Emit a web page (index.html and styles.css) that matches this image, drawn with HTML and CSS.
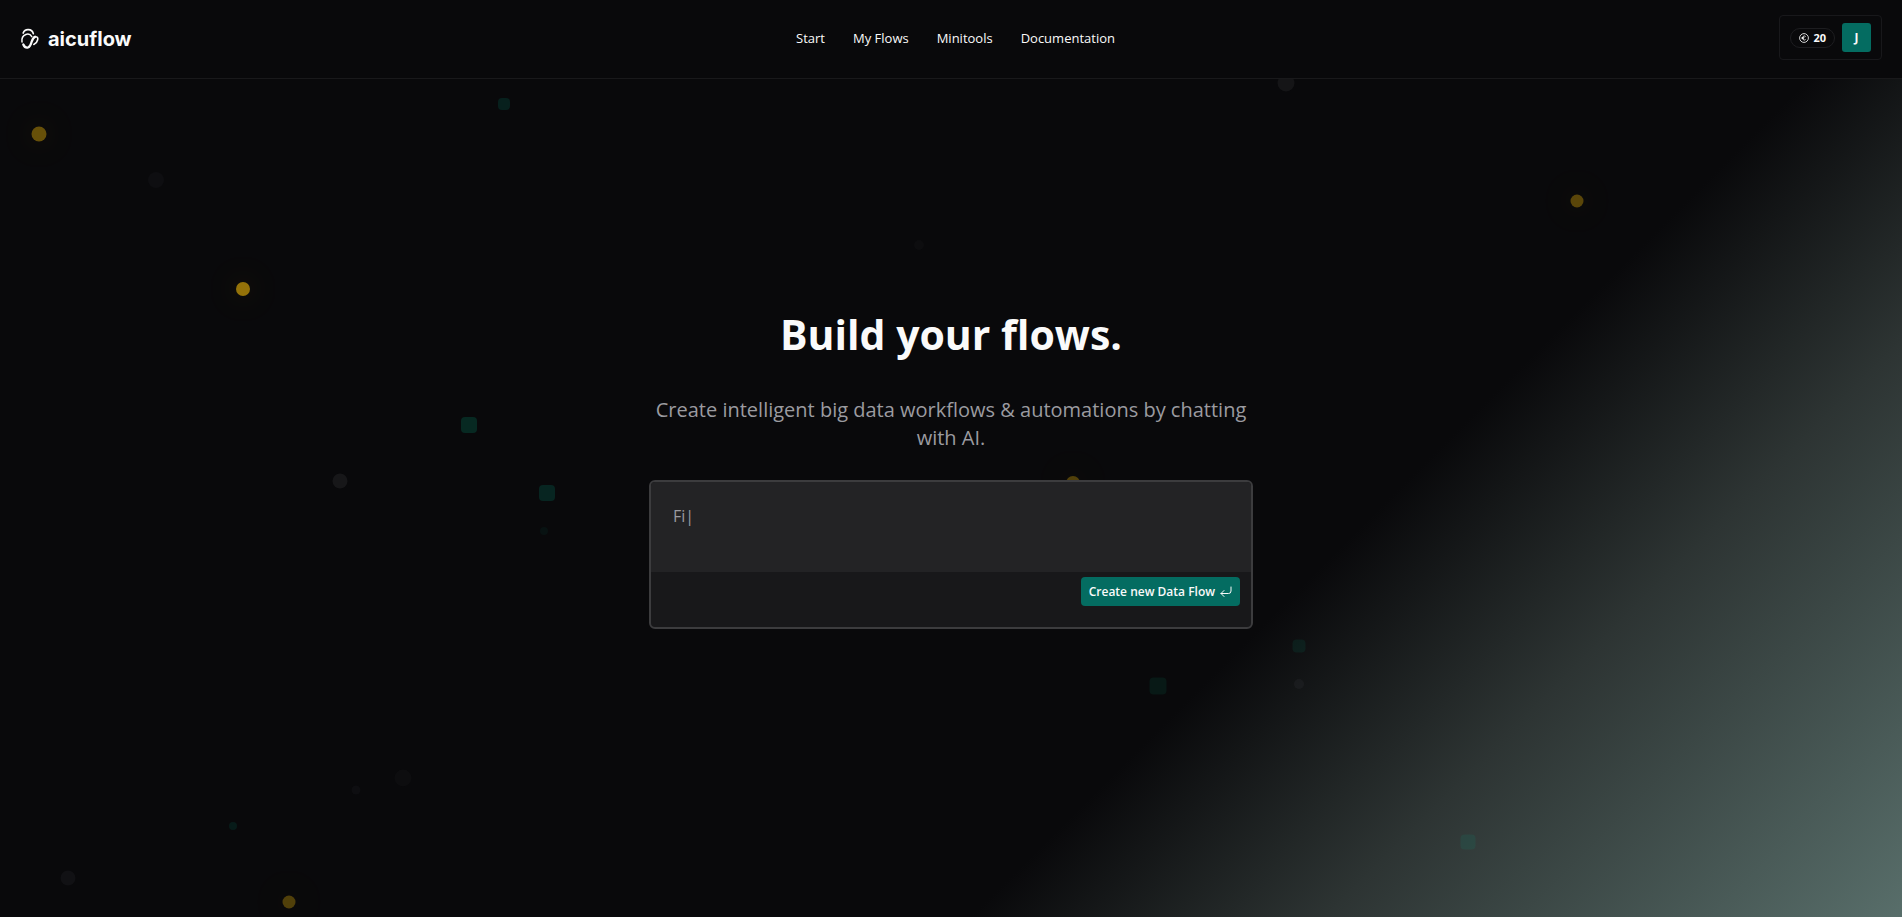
FILE: index.html
```html
<!DOCTYPE html>
<html lang="en">
<head>
<meta charset="utf-8">
<meta name="viewport" content="width=device-width, initial-scale=1">
<title>aicuflow</title>
<link rel="stylesheet" href="styles.css">
</head>
<body>

<!-- Header -->
<header class="header">
<a href="#" class="brand">
<svg class="brand-icon" viewBox="0 0 20 22" fill="none" stroke="currentColor" stroke-linecap="round">
<path d="M3.200 5C4 2.800 6 1.500 8.300 1.600c2.600.1 4.500 1.700 5 4" stroke-width="1.700"/>
<path d="M11.800 8.700C10.500 6.500 8 5.700 5.800 6.500 3 7.600 1.500 10.500 2 14" stroke-width="1.500"/>
<path d="M3.300 16.500c1 2.300 2.900 3.500 4.700 3 2.500-.7 2.900-3.700 3.800-6.200.8-2.300 1.600-4 3.200-4.500" stroke-width="2.300"/>
<path d="M15 8.800c2-.5 3.200.8 2.700 2.900-.5 2.200-2 3.900-3.900 4.800" stroke-width="1.600"/>
</svg>
<span>aicuflow</span>
</a>

<nav class="nav">
<a href="#">Start</a>
<a href="#">My Flows</a>
<a href="#">Minitools</a>
<a href="#">Documentation</a>
</nav>

<div class="account">
<button class="credits">
<svg class="credits-icon" viewBox="0 0 12 12" fill="none" stroke="currentColor">
<circle cx="6" cy="6" r="5.300"/>
<path d="M8 4.200A2.400 2.400 0 1 0 8 7.800M3 5.500h3.500M3 6.700h3"/>
</svg>
<span>20</span>
</button>
<button class="avatar">J</button>
</div>
</header>

<!-- Hero -->
<main class="hero">
<div class="particles" id="particles"></div>

<div class="hero-content">
<h1 class="hero-title">Build your flows.</h1>
<p class="hero-text">Create intelligent big data workflows &amp; automations by chatting with AI.</p>

<form class="prompt">
<textarea class="prompt-input" placeholder="Fi|" aria-label="Describe your flow"></textarea>
<div class="prompt-footer">
<button type="button" class="create-btn">
<span>Create new Data Flow</span>
<svg class="enter-icon" viewBox="0 0 12 12" fill="none" stroke="currentColor" stroke-linecap="round" stroke-linejoin="round">
<path d="M11 1v4a2.500 2.500 0 0 1-2.500 2.500H1M4 4.500l-3 3 3 3"/>
</svg>
</button>
</div>
</form>
</div>
</main>

<script src="particles.js"></script>
</body>
</html>
```
FILE: styles.css
```css
:root {
--bg: #09090b;
--border: #18181b;
--text: #fafafa;
--muted: #9b9ba0;
--primary: #046c61;
--gold: #eab308;
}

* {
margin: 0;
padding: 0;
box-sizing: border-box;
}

body {
background: var(--bg);
color: var(--text);
font-family: 'Open Sans', 'Noto Sans', sans-serif;
min-height: 100vh;
display: flex;
flex-direction: column;
}

a {
color: inherit;
text-decoration: none;
}

button {
font-family: inherit;
color: inherit;
border: none;
cursor: pointer;
}

/* Header */
.header {
display: flex;
align-items: center;
justify-content: space-between;
padding: 15px 20px 18px;
border-bottom: 1px solid #19191b;
}

.brand {
display: flex;
align-items: center;
gap: 8px;
padding-top: 2px;
font-family: Inter, sans-serif;
font-size: 20px;
font-weight: 700;
}

.brand-icon {
width: 20px;
height: 22px;
}

.nav {
display: flex;
gap: 28px;
font-size: 13px;
font-weight: 500;
}

.account {
display: flex;
align-items: center;
gap: 7px;
padding: 7px 10px;
border: 1px solid var(--border);
border-radius: 4px;
}

.credits {
display: flex;
align-items: center;
gap: 4px;
height: 20px;
padding: 0 8px;
background: none;
border: 1px solid #1d1d20;
border-radius: 10px;
font-size: 11px;
font-weight: 700;
}

.credits-icon {
width: 10px;
height: 10px;
}

.avatar {
width: 29px;
height: 29px;
background: var(--primary);
border-radius: 3px;
font-size: 12px;
font-weight: 700;
}

/* Hero */
.hero {
position: relative;
flex: 1;
display: flex;
justify-content: center;
overflow: hidden;
background: linear-gradient(135deg, var(--bg) 66%, #2d3433 79%, #586e6a 100%);
}

.hero-content {
position: relative;
width: 100%;
max-width: 604px;
padding-top: 225px;
text-align: center;
}

.hero-title {
font-size: 41px;
font-weight: 700;
line-height: 60px;
margin-bottom: 32px;
}

.hero-text {
color: var(--muted);
font-size: 20px;
line-height: 28px;
margin-bottom: 28px;
}

.prompt {
display: flex;
flex-direction: column;
background: #18181a;
border: 2px solid #3c3c3e;
border-radius: 6px;
overflow: hidden;
}

.prompt-input {
height: 90px;
padding: 22px;
background: #232325;
border: none;
outline: none;
resize: none;
color: var(--text);
font-family: inherit;
font-size: 16px;
line-height: 24px;
}

.prompt-input::placeholder {
color: var(--muted);
}

.prompt-footer {
display: flex;
justify-content: flex-end;
align-items: flex-start;
height: 55px;
padding: 5px 11px;
}

.create-btn {
display: flex;
align-items: center;
gap: 5px;
height: 29px;
padding: 0 8px;
background: var(--primary);
border-radius: 4px;
font-size: 12px;
font-weight: 600;
}

.enter-icon {
width: 12px;
height: 12px;
}

/* Floating particles */
.particle {
position: absolute;
transform: translate(-50%, -50%);
border-radius: 50%;
}

.particle.gold {
background: var(--gold);
box-shadow: 0 0 30px rgba(234, 179, 8, 0.3);
}

.particle.teal {
background: #00a884;
border-radius: 4px;
}

.particle.gray {
background: #a1a1aa;
}
```
FILE: particles.js
```js
// x and y in percent of the hero, size in pixels
const particles = [
{ type: 'gold', x: 2.07, y: 6.6, size: 15, opacity: 0.42 },
{ type: 'gold', x: 12.8, y: 25.1, size: 14, opacity: 0.62 },
{ type: 'gold', x: 82.9, y: 14.6, size: 13, opacity: 0.36 },
{ type: 'gold', x: 56.4, y: 48.2, size: 14, opacity: 0.32 },
{ type: 'gold', x: 15.2, y: 98.2, size: 13, opacity: 0.32 },
{ type: 'teal', x: 26.5, y: 3, size: 12, opacity: 0.15 },
{ type: 'teal', x: 24.65, y: 41.3, size: 16, opacity: 0.2 },
{ type: 'teal', x: 28.75, y: 49.4, size: 16, opacity: 0.18 },
{ type: 'teal', x: 28.6, y: 53.9, size: 8, opacity: 0.06 },
{ type: 'teal', x: 12.25, y: 89.1, size: 8, opacity: 0.12 },
{ type: 'teal', x: 60.9, y: 72.4, size: 17, opacity: 0.1 },
{ type: 'teal', x: 68.3, y: 67.7, size: 13, opacity: 0.1 },
{ type: 'teal', x: 77.2, y: 91.1, size: 15, opacity: 0.12 },
{ type: 'gray', x: 8.2, y: 12.1, size: 16, opacity: 0.04 },
{ type: 'gray', x: 67.6, y: 0.5, size: 17, opacity: 0.08 },
{ type: 'gray', x: 48.3, y: 19.8, size: 10, opacity: 0.03 },
{ type: 'gray', x: 17.9, y: 48, size: 15, opacity: 0.09 },
{ type: 'gray', x: 3.6, y: 95.3, size: 15, opacity: 0.06 },
{ type: 'gray', x: 21.2, y: 83.4, size: 17, opacity: 0.03 },
{ type: 'gray', x: 18.7, y: 84.9, size: 9, opacity: 0.04 },
{ type: 'gray', x: 68.3, y: 72.2, size: 10, opacity: 0.06 }
];

const container = document.getElementById('particles');
particles.forEach(p => {
const el = document.createElement('div');
el.className = 'particle ' + p.type;
el.style.left = p.x + '%';
el.style.top = p.y + '%';
el.style.width = p.size + 'px';
el.style.height = p.size + 'px';
el.style.opacity = p.opacity;
container.appendChild(el);
});
```
